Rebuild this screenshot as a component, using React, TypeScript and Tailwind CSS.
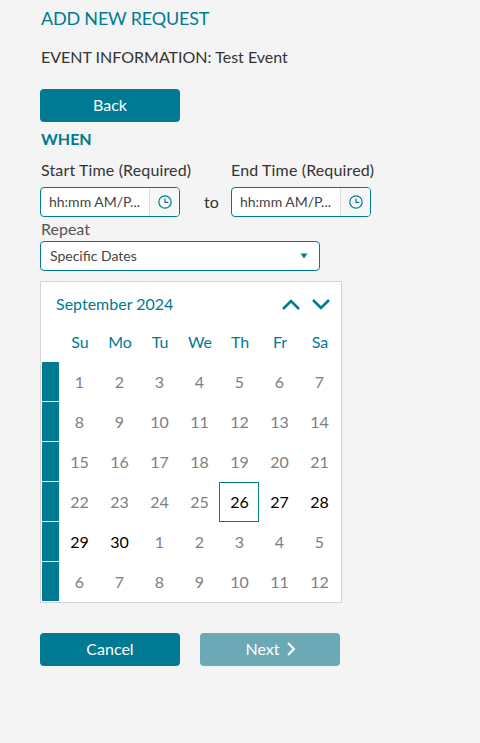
import React from "react";

const TEAL = "text-[#007a93]";

function Clock() {
  return (
    <svg width="14" height="14" viewBox="0 0 14 14" fill="none" stroke="#007a93" strokeWidth="1.2">
      <circle cx="7" cy="7" r="6.2" />
      <path d="M7 3.4V7.4H10.2" />
    </svg>
  );
}

function TimeInput() {
  return (
    <div className="flex h-[30px] w-[140px] overflow-hidden rounded-[4px] border border-[#007a93] bg-white">
      <div className="flex-1 pl-[8px] text-[14px] leading-[28px] text-[#444]">hh:mm AM/P...</div>
      <div className="flex w-[30px] items-center justify-center border-l border-[#ddd] bg-[#f7f7f7]">
        <Clock />
      </div>
    </div>
  );
}

const weeks: [string, boolean][][] = [
  [["1", false], ["2", false], ["3", false], ["4", false], ["5", false], ["6", false], ["7", false]],
  [["8", false], ["9", false], ["10", false], ["11", false], ["12", false], ["13", false], ["14", false]],
  [["15", false], ["16", false], ["17", false], ["18", false], ["19", false], ["20", false], ["21", false]],
  [["22", false], ["23", false], ["24", false], ["25", false], ["26", true], ["27", true], ["28", true]],
  [["29", true], ["30", true], ["1", false], ["2", false], ["3", false], ["4", false], ["5", false]],
  [["6", false], ["7", false], ["8", false], ["9", false], ["10", false], ["11", false], ["12", false]],
];

export default function App() {
  return (
    <div className="min-h-[743px] bg-[#f4f4f4] pl-[40px] pt-[7px] font-['Lato','Liberation_Sans',sans-serif] text-[16px] text-[#333]">
      <h1 className={`pl-[1px] text-[18px] leading-[22px] tracking-[-0.2px] ${TEAL}`}>ADD NEW REQUEST</h1>
      <p className="mt-[17px] pl-[1px] leading-[22px] text-[#333]">EVENT INFORMATION: Test Event</p>
      <button className="mt-[21px] block h-[33px] w-[140px] rounded-[4px] bg-[#007a93] pb-[1px] text-white">Back</button>
      <h2 className={`mt-[7px] pl-[1px] font-bold leading-[20px] ${TEAL}`}>WHEN</h2>
      <div className="mt-[10px] flex">
        <div className="w-[191px]">
          <div className="whitespace-nowrap pl-[1px] leading-[22px] tracking-[0.14px]">Start Time (Required)</div>
          <div className="mt-[6px]"><TimeInput /></div>
        </div>
        <div>
          <div className="whitespace-nowrap leading-[22px] tracking-[0.14px]">End Time (Required)</div>
          <div className="relative mt-[6px]">
            <span className="absolute left-[-27px] top-[4px] leading-[22px]">to</span>
            <TimeInput />
          </div>
        </div>
      </div>
      <div className="mt-[1px] pl-[1px] leading-[22px] text-[#555]">Repeat</div>
      <div className="mt-[1px] flex h-[30px] w-[280px] items-center justify-between rounded-[4px] border border-[#007a93] bg-white pl-[9px] pr-[11px] text-[14px] text-[#444]">
        <span className="mb-[1px]">Specific Dates</span>
        <svg width="8" height="6" viewBox="0 0 8 6"><path d="M0.5 0.5H7.5L4 5.5Z" fill="#007a93" /></svg>
      </div>
      <div className="mt-[10px] h-[322px] w-[302px] border border-[#d4d4d4] bg-white">
        <div className="flex h-[44px] items-center justify-between pl-[15px] pr-[11px]">
          <span className={`leading-[22px] ${TEAL}`}>September 2024</span>
          <div className="flex gap-[12px]">
            <svg width="18" height="11" viewBox="0 0 18 11" fill="none" stroke="#007a93" strokeWidth="2.6"><path d="M1 10L9 2L17 10" /></svg>
            <svg width="18" height="11" viewBox="0 0 18 11" fill="none" stroke="#007a93" strokeWidth="2.6"><path d="M1 1L9 9L17 1" /></svg>
          </div>
        </div>
        <div className={`ml-[18px] grid h-[31px] grid-cols-[repeat(7,40px)] items-center pl-[1px] text-center leading-[22px] ${TEAL}`}>
          {["Su", "Mo", "Tu", "We", "Th", "Fr", "Sa"].map((d) => <span key={d}>{d}</span>)}
        </div>
        <div className="ml-[1px] mt-[5px]">
          {weeks.map((w, i) => (
            <div key={i} className="flex h-[40px]">
              <div className="mb-[1px] w-[17px] bg-[#007a93]" />
              <div className="grid grid-cols-[repeat(7,40px)]">
                {w.map(([d, on], j) => (
                  <div
                    key={j}
                    className={`flex h-[40px] items-center justify-center pl-[1px] ${on ? "text-black" : "text-[#808080]"} ${d === "26" ? "border border-[#007a93]" : ""}`}
                  >
                    {d}
                  </div>
                ))}
              </div>
            </div>
          ))}
        </div>
      </div>
      <div className="mt-[30px] flex gap-[20px]">
        <button className="h-[33px] w-[140px] rounded-[4px] bg-[#007a93] pb-[1px] text-white">Cancel</button>
        <button className="flex h-[33px] w-[140px] items-center justify-center gap-[6px] rounded-[4px] bg-[#6ba9b7] pb-[1px] pl-[1px] text-white">
          Next
          <svg width="10" height="14" viewBox="0 0 10 14" fill="none" stroke="#fff" strokeWidth="2"><path d="M2 1L8 7L2 13" /></svg>
        </button>
      </div>
    </div>
  );
}
